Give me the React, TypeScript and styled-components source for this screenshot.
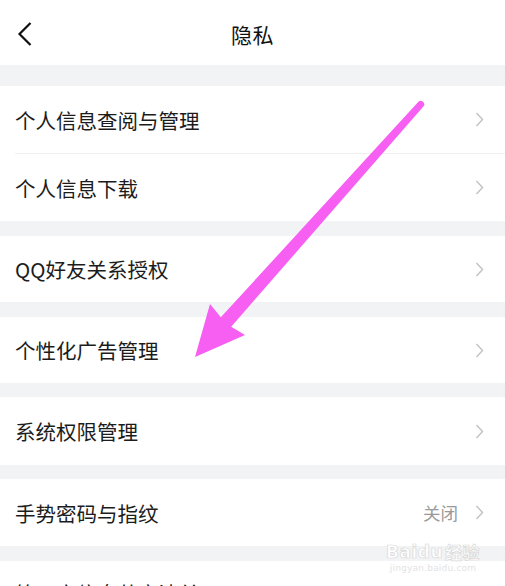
import React from "react";
import styled, { createGlobalStyle } from "styled-components";

const Global = createGlobalStyle`
  html, body { margin: 0; padding: 0; background: #f2f3f5; }
  body { font-family: "Noto Sans CJK SC", "Noto Sans", sans-serif; overflow: hidden; }
`;

const Page = styled.div`
  position: relative;
  width: 505px;
  height: 586px;
  overflow: hidden;
  background: #f2f3f5;
  display: flex;
  flex-direction: column;
`;

const Header = styled.header`
  height: 65px;
  flex: none;
  background: #fff;
  display: grid;
  grid-template-columns: 60px 1fr 60px;
  align-items: center;
`;

const BackBtn = styled.div`
  display: flex;
  align-items: center;
  padding-left: 17px;
  padding-top: 3px;
`;

const Title = styled.h1`
  margin: 0;
  text-align: center;
  font-size: 21px;
  font-weight: 400;
  color: #111;
  padding-top: 3px;
  letter-spacing: 0.5px;
`;

const Group = styled.section<{ $gap: number }>`
  margin-top: ${(p) => p.$gap}px;
  background: #fff;
  display: flex;
  flex-direction: column;
  flex: none;
`;

const Row = styled.div<{ $h: number }>`
  height: ${(p) => p.$h}px;
  display: flex;
  align-items: center;
  padding: 0 21px 0 15px;
`;

const Divider = styled.div`
  height: 1px;
  margin-left: 15px;
  background: #efefef;
`;

const Label = styled.span`
  flex: 1;
  font-size: 20.5px;
  color: #1c1c1c;
  white-space: nowrap;
`;

const Value = styled.span`
  font-size: 17.5px;
  color: #9a9a9a;
  margin-right: 17px;
`;

const Overlay = styled.svg`
  position: absolute;
  left: 0;
  top: 0;
  pointer-events: none;
`;

const Watermark = styled.div`
  position: absolute;
  left: 386px;
  top: 542px;
  display: flex;
  flex-direction: column;
  align-items: center;
  color: #fff;
  font-family: "DejaVu Sans", sans-serif;
  pointer-events: none;
`;

const WmMain = styled.div`
  display: flex;
  align-items: center;
  font-size: 17px;
  font-weight: 700;
  line-height: 20px;
  -webkit-text-stroke: 0.7px #d9d9d9;
  letter-spacing: 0.5px;
`;

const WmCn = styled.span`
  font-family: "Noto Sans CJK SC", sans-serif;
  font-size: 17px;
  margin-left: 2px;
`;

const WmSub = styled.div`
  font-size: 9px;
  color: #e3e3e3;
  letter-spacing: 0.2px;
  line-height: 12px;
`;

const Chevron = () => (
  <svg width="9" height="15" viewBox="0 0 9 15">
    <polyline points="1.5,1 7.5,7.5 1.5,14" fill="none" stroke="#c4c4c8" strokeWidth="1.5" />
  </svg>
);

const BackIcon = () => (
  <svg width="16" height="24" viewBox="0 0 16 24">
    <polyline points="13.5,1 2.5,12 13.5,23" fill="none" stroke="#111" strokeWidth="2.2" />
  </svg>
);

type Item = { label: string; value?: string };

const groups: { gap: number; h: number; items: Item[] }[] = [
  { gap: 21, h: 67, items: [{ label: "个人信息查阅与管理" }, { label: "个人信息下载" }] },
  { gap: 15, h: 66, items: [{ label: "QQ好友关系授权" }] },
  { gap: 15, h: 66, items: [{ label: "个性化广告管理" }] },
  { gap: 14, h: 68, items: [{ label: "系统权限管理" }] },
  { gap: 14, h: 67, items: [{ label: "手势密码与指纹", value: "关闭" }] },
  { gap: 15, h: 64, items: [{ label: "第三方信息共享清单" }] },
];

export default function App() {
  return (
    <>
      <Global />
      <Page>
        <Header>
          <BackBtn>
            <BackIcon />
          </BackBtn>
          <Title>隐私</Title>
          <div />
        </Header>
        {groups.map((g, gi) => (
          <Group key={gi} $gap={g.gap}>
            {g.items.map((it, i) => (
              <React.Fragment key={it.label}>
                {i > 0 && <Divider />}
                <Row $h={g.h}>
                  <Label>{it.label}</Label>
                  {it.value && <Value>{it.value}</Value>}
                  <Chevron />
                </Row>
              </React.Fragment>
            ))}
          </Group>
        ))}
        <Overlay width="505" height="586" viewBox="0 0 505 586">
          <path
            d="M 418.4 101.7 L 220.8 317.3 L 210 304 L 195 357 L 245 335 L 231.2 326.7 L 423.6 106.3 A 3.5 3.5 0 0 0 418.4 101.7 Z"
            fill="#f75ef2"
          />
        </Overlay>
        <Watermark>
          <WmMain>
            Bai<span>du</span>
            <WmCn>经验</WmCn>
          </WmMain>
          <WmSub>jingyan.baidu.com</WmSub>
        </Watermark>
      </Page>
    </>
  );
}
